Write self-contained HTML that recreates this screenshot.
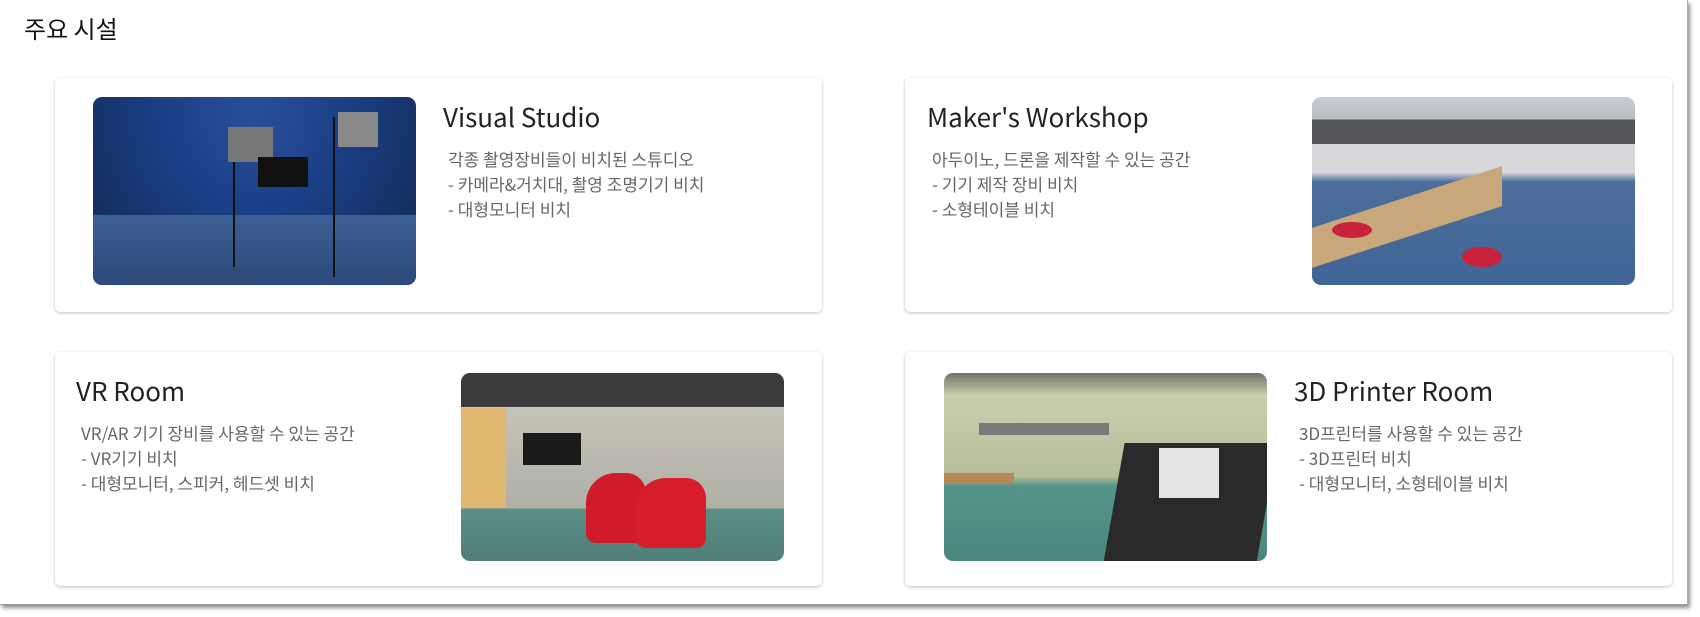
<!DOCTYPE html>
<html><head><meta charset="utf-8"><style>
*{margin:0;padding:0;box-sizing:border-box}
body{width:1700px;height:617px;background:#fff;font-family:"Noto Sans CJK KR","Liberation Sans",sans-serif;position:relative;overflow:hidden}
.frame{position:absolute;left:0;top:0;width:1688px;height:605px;background:#fff;box-shadow:2px 3px 4px rgba(0,0,0,.45);border-right:1px solid #aaa;border-bottom:1px solid #999}
h1{position:absolute;left:24px;top:10px;font-size:24px;font-weight:400;color:#111}
.card{position:absolute;width:767px;height:234px;background:#fff;border-radius:5px;box-shadow:0 1px 3px rgba(0,0,0,.25)}
.img{position:absolute;width:323px;height:188px;border-radius:9px;top:19px;overflow:hidden}
.t{position:absolute;top:20px;font-size:26px;color:#222}
.d{position:absolute;top:68px;font-size:17px;line-height:25px;color:#666;padding-left:5px}
</style></head><body>
<div class="frame"></div>
<h1>주요 시설</h1>
<div class="card" style="left:55px;top:78px">
 <div class="img" style="left:38px;background:radial-gradient(ellipse at 50% 10%,#2a4f9a 0,#1b3f86 40%,#14305f 80%),#1b3f86">
  <div style="position:absolute;left:0;right:0;bottom:0;height:70px;background:linear-gradient(#3d5f95,#2b4a7a)"></div>
  <div style="position:absolute;left:140px;top:30px;width:40px;height:140px;border-left:2px solid #111"></div>
  <div style="position:absolute;left:240px;top:20px;width:30px;height:160px;border-left:2px solid #111"></div>
  <div style="position:absolute;left:135px;top:30px;width:45px;height:35px;background:#777"></div>
  <div style="position:absolute;left:245px;top:15px;width:40px;height:35px;background:#888"></div>
  <div style="position:absolute;left:165px;top:60px;width:50px;height:30px;background:#111"></div>
 </div>
 <div class="t" style="left:388px">Visual Studio</div>
 <div class="d" style="left:388px">각종 촬영장비들이 비치된 스튜디오<br>- 카메라&amp;거치대, 촬영 조명기기 비치<br>- 대형모니터 비치</div>
</div>
<div class="card" style="left:905px;top:78px">
 <div class="t" style="left:22px">Maker's Workshop</div>
 <div class="d" style="left:22px">아두이노, 드론을 제작할 수 있는 공간<br>- 기기 제작 장비 비치<br>- 소형테이블 비치</div>
 <div class="img" style="left:407px;background:linear-gradient(#c9ccd4 0,#b9bcc3 12%,#55565a 12%,#55565a 25%,#d8d8dc 25%,#d8d8dc 40%,#4d6f9c 45%,#3f6496 100%)">
  <div style="position:absolute;left:0;top:100px;width:190px;height:40px;background:#c8a77a;transform:skewY(-18deg)"></div>
  <div style="position:absolute;left:150px;top:150px;width:40px;height:20px;border-radius:50%;background:#c8233a"></div>
  <div style="position:absolute;left:20px;top:125px;width:40px;height:16px;border-radius:50%;background:#c8233a"></div>
 </div>
</div>
<div class="card" style="left:55px;top:352px">
 <div class="t" style="left:21px">VR Room</div>
 <div class="d" style="left:21px">VR/AR 기기 장비를 사용할 수 있는 공간<br>- VR기기 비치<br>- 대형모니터, 스피커, 헤드셋 비치</div>
 <div class="img" style="left:406px;top:21px;background:linear-gradient(#3b3b3b 0,#3b3b3b 18%,#c6c3b8 18%,#b0b0a6 72%,#5c8f86 72%,#4f7f78 100%)">
  <div style="position:absolute;left:0;top:35px;width:45px;height:100px;background:#e0b872"></div>
  <div style="position:absolute;left:62px;top:60px;width:58px;height:32px;background:#1a1a1a"></div>
  <div style="position:absolute;left:125px;top:100px;width:60px;height:70px;background:#d01c2a;border-radius:30px 20px 10px 10px"></div>
  <div style="position:absolute;left:175px;top:105px;width:70px;height:70px;background:#d81e2c;border-radius:30px 20px 10px 10px"></div>
 </div>
</div>
<div class="card" style="left:905px;top:352px">
 <div class="img" style="left:39px;top:21px;background:linear-gradient(#6e7466 0,#c8cfae 12%,#b6bd9a 55%,#56948a 60%,#4a877e 100%)">
  <div style="position:absolute;left:170px;top:70px;width:153px;height:120px;background:#2a2a2a;transform:skewX(-10deg)"></div>
  <div style="position:absolute;left:215px;top:75px;width:60px;height:50px;background:#e4e4e4"></div>
  <div style="position:absolute;left:0;top:100px;width:70px;height:10px;background:#b58b55"></div>
  <div style="position:absolute;left:35px;top:50px;width:130px;height:12px;background:#7c7a78"></div>
 </div>
 <div class="t" style="left:389px">3D Printer Room</div>
 <div class="d" style="left:389px">3D프린터를 사용할 수 있는 공간<br>- 3D프린터 비치<br>- 대형모니터, 소형테이블 비치</div>
</div>
</body></html>
